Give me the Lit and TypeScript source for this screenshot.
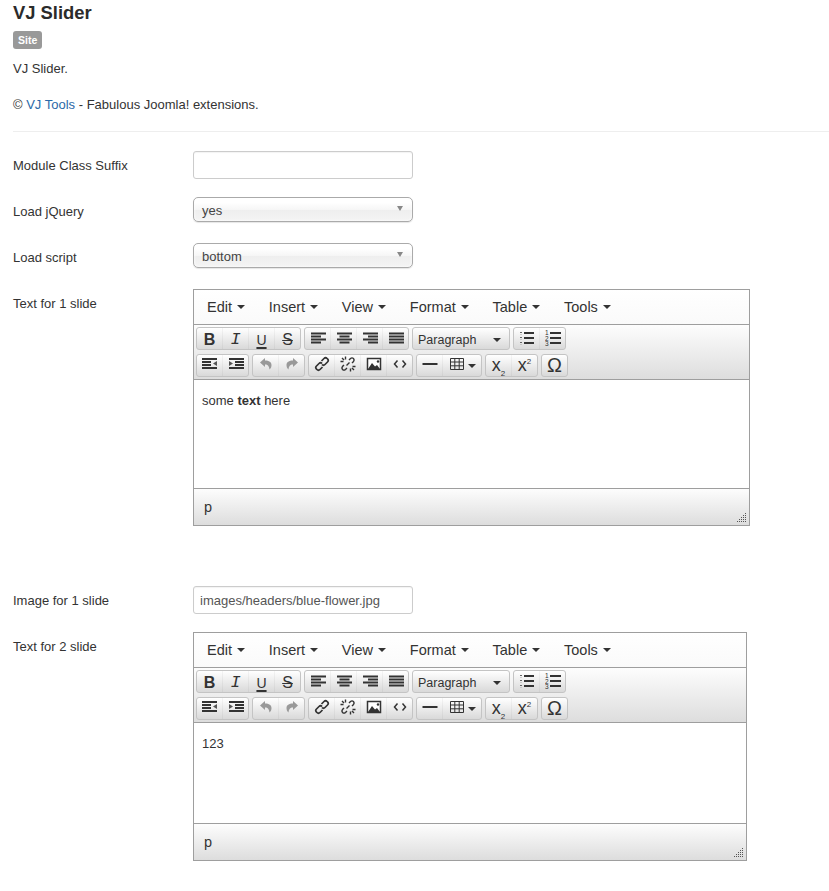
import { LitElement, html, css, svg } from 'lit';
import { customElement, property } from 'lit/decorators.js';

// four horizontal bars, [x, width] per row
const bars = (rows: number[][]) => html`<svg width="16" height="16" viewBox="0 0 16 16">
  ${rows.map(([x, w], i) => svg`<rect x=${x} y=${2.500 + i * 3} width=${w} height="2" fill="#333"></rect>`)}
</svg>`;

const icon = (body: unknown) => html`<svg width="16" height="16" viewBox="0 0 16 16">${body}</svg>`;

const icons: Record<string, unknown> = {
  alignleft: bars([[1, 15], [1, 10], [1, 15], [1, 10]]),
  aligncenter: bars([[1, 15], [3.500, 10], [1, 15], [3.500, 10]]),
  alignright: bars([[1, 15], [6, 10], [1, 15], [6, 10]]),
  justify: bars([[1, 15], [1, 15], [1, 15], [1, 15]]),
  bullist: icon(svg`
    <path d="M5 2h10v2H5zM5 7h10v2H5zM5 12h10v2H5z" fill="#333"></path>
    <path d="M1 2h2v1H1zM1 7h2v1H1zM1 12h2v1H1z" fill="#666"></path>
    <path d="M1 4h2v.6H1zM1 9h2v.6H1zM1 14h2v.6H1z" fill="#aaa"></path>`),
  numlist: icon(svg`
    <path d="M5 2h11v2H5zM5 7h11v2H5zM5 12h11v2H5z" fill="#333"></path>
    <text x="0" y="5" font-size="6.500" font-family="Liberation Sans" fill="#333">1</text>
    <text x="0" y="10.500" font-size="6.500" font-family="Liberation Sans" fill="#333">2</text>
    <text x="0" y="16" font-size="6.500" font-family="Liberation Sans" fill="#333">3</text>`),
  outdent: icon(svg`
    <path d="M0 2h15v2H0zM0 5h9v2H0zM0 8h9v2H0zM0 11h15v2H0z" fill="#333"></path>
    <path d="M15 5v5l-4-2.500z" fill="#555"></path>`),
  indent: icon(svg`
    <path d="M1 2h15v2H1zM7 5h9v2H7zM7 8h9v2H7zM1 11h15v2H1z" fill="#333"></path>
    <path d="M1 5v5l4-2.500z" fill="#555"></path>`),
  undo: icon(svg`<path d="M7 2 2 6.500 7 11V8.500c3 0 4 1.500 4.500 5 1.500-1 2-3 2-4.500 0-3-2.500-4.500-6.500-4.500z" fill="#999"></path>`),
  redo: icon(svg`<path d="M9 2 14 6.500 9 11V8.500c-3 0-4 1.500-4.500 5-1.500-1-2-3-2-4.500 0-3 2.500-4.500 6.500-4.500z" fill="#999"></path>`),
  link: icon(svg`<g fill="none" stroke="#333" stroke-width="1.700">
    <path d="M7.500 5 10 2.500a2.200 2.200 0 0 1 3.100 0l.4.400a2.200 2.200 0 0 1 0 3.100L11 8.500a2.200 2.200 0 0 1-3.100 0"></path>
    <path d="M8.500 11 6 13.500a2.200 2.200 0 0 1-3.100 0l-.4-.400a2.200 2.200 0 0 1 0-3.100L5 7.500a2.200 2.200 0 0 1 3.100 0"></path></g>`),
  unlink: icon(svg`<g fill="none" stroke="#333" stroke-width="1.400">
    <path d="M9 4 10.500 2.500a2.300 2.300 0 0 1 3 0 2.300 2.300 0 0 1 0 3L12 7"></path>
    <path d="M7 12 5.500 13.500a2.300 2.300 0 0 1-3 0 2.300 2.300 0 0 1 0-3L4 9"></path>
    <path d="M5.500 0.500v3M0.500 5.500h3M10.500 12.500v3M12.500 10.500h3M2 2l2 2M12 12l2 2M6.500 9.500l3-3"></path></g>`),
  image: icon(svg`
    <path d="M1.500 2.500h13v11h-13z" fill="#fff" stroke="#333" stroke-width="1.500"></path>
    <path d="M2 13 6 7l3 3.500 2-1.500 3 4z" fill="#333"></path>
    <circle cx="12" cy="5.500" r="1.200" fill="#333"></circle>`),
  code: icon(svg`<path d="M5.500 4.500 2.500 8l3 3.500M10.500 4.500l3 3.500-3 3.500" fill="none" stroke="#333" stroke-width="1.500"></path>`),
  hr: icon(svg`<rect x="0.500" y="7" width="15" height="2" fill="#333"></rect>`),
  table: icon(svg`<path d="M1.500 2.500h13v11h-13zM1.500 6h13M1.500 9.800h13M5.800 2.500v11M10.200 2.500v11" fill="none" stroke="#333"></path>`),
};

type Btn = { icon?: string; text?: string; cls?: string; caret?: boolean };

const toolbarRows: Btn[][][] = [
  [
    [
      { text: 'B', cls: 'bold' },
      { text: 'I', cls: 'ital' },
      { text: 'U', cls: 'under' },
      { text: 'S', cls: 'strike' },
    ],
    [{ icon: 'alignleft' }, { icon: 'aligncenter' }, { icon: 'alignright' }, { icon: 'justify' }],
    [{ text: 'Paragraph', cls: 'listbox', caret: true }],
    [{ icon: 'bullist' }, { icon: 'numlist' }],
  ],
  [
    [{ icon: 'outdent' }, { icon: 'indent' }],
    [{ icon: 'undo' }, { icon: 'redo' }],
    [{ icon: 'link' }, { icon: 'unlink' }, { icon: 'image' }, { icon: 'code' }],
    [{ icon: 'hr' }, { icon: 'table', caret: true, cls: 'wide' }],
    [{ text: 'x', cls: 'sub' }, { text: 'x', cls: 'sup' }],
    [{ text: 'Ω', cls: 'omega' }],
  ],
];

const menus = ['Edit', 'Insert', 'View', 'Format', 'Table', 'Tools'];

@customElement('tiny-editor')
export class TinyEditor extends LitElement {
  static styles = css`
    :host {
      display: block;
      box-sizing: border-box;
      border: 1px solid #9e9e9e;
      font-family: 'Liberation Sans', Arial, sans-serif;
      color: #333;
    }
    .menubar {
      display: flex;
      height: 34px;
      align-items: center;
      padding-left: 13px;
      gap: 23.800px;
      border-bottom: 1px solid #9e9e9e;
      background: linear-gradient(#fff, #fafafa);
      font-size: 14.500px;
    }
    .menu {
      display: flex;
      align-items: center;
      gap: 5px;
    }
    .caret {
      width: 0;
      height: 0;
      border-left: 4px solid transparent;
      border-right: 4px solid transparent;
      border-top: 4px solid #333;
    }
    .toolbar {
      height: 55px;
      box-sizing: border-box;
      padding: 2px 2px 0;
      display: flex;
      flex-direction: column;
      gap: 4px;
      background: linear-gradient(#fdfdfd, #ddd);
      border-bottom: 1px solid #9e9e9e;
    }
    .row {
      display: flex;
      gap: 3px;
    }
    .group {
      display: flex;
      height: 23px;
      box-sizing: border-box;
      border: 1px solid #c4c4c4;
      border-radius: 3px;
      background: linear-gradient(#fff, #d9d9d9);
    }
    .btn {
      display: flex;
      align-items: center;
      justify-content: center;
      box-sizing: border-box;
      width: 25px;
      gap: 4px;
      font-size: 14px;
      color: #333;
    }
    .row:first-child .btn {
      padding-top: 2px;
    }
    .btn + .btn {
      margin-left: 1px;
      box-shadow: -1px 0 0 rgba(0, 0, 0, 0.04);
    }
    .bold {
      font-weight: bold;
      font-size: 16px;
    }
    .ital {
      font-family: 'Liberation Mono', monospace;
      font-style: italic;
      font-size: 17px;
    }
    .under span {
      text-decoration: underline 2px;
      text-underline-offset: 2px;
      font-size: 14px;
    }
    .strike {
      text-decoration: line-through;
      font-size: 16px;
    }
    .listbox {
      width: 96px;
      font-size: 12.500px;
      justify-content: space-between;
      padding: 0 8px 0 5px;
    }
    .wide {
      width: 38px;
      gap: 3px;
    }
    .sub sub,
    .sup sup {
      font-size: 8px;
      line-height: 0;
    }
    .sub,
    .sup {
      font-size: 18px;
      gap: 0;
    }
    .omega {
      font-size: 20px;
    }
    .edit {
      background: #fff;
      padding: 13px 8px 0;
      font-size: 13px;
      box-sizing: border-box;
      border-bottom: 1px solid #9e9e9e;
      line-height: 15px;
    }
    .status {
      position: relative;
      height: 36px;
      display: flex;
      align-items: center;
      padding-left: 10px;
      font-size: 14.500px;
      background: linear-gradient(#fdfdfd, #ddd);
    }
    .grip {
      position: absolute;
      right: 2px;
      bottom: 2px;
    }
  `;

  @property({ type: Number }) editHeight = 109;

  private renderBtn(b: Btn) {
    let inner: unknown = b.text;
    if (b.cls === 'sub') inner = html`x<sub>2</sub>`;
    if (b.cls === 'sup') inner = html`x<sup>2</sup>`;
    if (b.icon) inner = icons[b.icon];
    return html`<div class="btn ${b.cls ?? ''}">
      <span>${inner}</span>${b.caret ? html`<i class="caret"></i>` : ''}
    </div>`;
  }

  render() {
    return html`
      <div class="menubar">
        ${menus.map((m) => html`<div class="menu"><span>${m}</span><i class="caret"></i></div>`)}
      </div>
      <div class="toolbar">
        ${toolbarRows.map(
          (row) => html`<div class="row">
            ${row.map((group) => html`<div class="group">${group.map((b) => this.renderBtn(b))}</div>`)}
          </div>`
        )}
      </div>
      <div class="edit" style="height: ${this.editHeight}px"><slot></slot></div>
      <div class="status">
        <span>p</span>
        <svg class="grip" width="10" height="10" viewBox="0 0 10 10" fill="#555">
          <path
            d="M8 0h1v1H8zM8 2h1v1H8zM6 2h1v1H6zM8 4h1v1H8zM6 4h1v1H6zM4 4h1v1H4zM8 6h1v1H8zM6 6h1v1H6zM4 6h1v1H4zM2 6h1v1H2zM8 8h1v1H8zM6 8h1v1H6zM4 8h1v1H4zM2 8h1v1H2zM0 8h1v1H0z"
          ></path>
        </svg>
      </div>
    `;
  }
}

@customElement('app-root')
export class AppRoot extends LitElement {
  static styles = css`
    :host {
      display: block;
      font-family: 'Liberation Sans', Arial, sans-serif;
      font-size: 13px;
      color: #333;
      padding: 0 0 30px 13px;
      background: #fff;
    }
    h1 {
      margin: 0;
      padding-top: 2px;
      font-size: 18.400px;
      line-height: 21px;
      font-weight: bold;
      color: #2b2b2b;
    }
    .badge {
      display: inline-block;
      margin-top: 8px;
      height: 18px;
      line-height: 18px;
      padding: 0 5px;
      border-radius: 3px;
      background: #999;
      color: #fff;
      font-size: 10.500px;
      font-weight: bold;
      vertical-align: top;
    }
    .desc {
      margin: 0;
      line-height: 18px;
    }
    .desc.first {
      margin-top: 11px;
    }
    .desc.second {
      margin-top: 18px;
    }
    a {
      color: #2a69a8;
      text-decoration: none;
    }
    hr {
      border: 0;
      border-top: 1px solid #eee;
      margin: 17px 0 19px;
    }
    .field {
      display: flex;
      margin-bottom: 18px;
    }
    .field.tall {
      margin-bottom: 60px;
    }
    .field.last {
      margin-bottom: 0;
    }
    label {
      width: 180px;
      flex: none;
      box-sizing: border-box;
      height: 28px;
      padding-top: 1px;
      line-height: 28px;
    }
    .input {
      box-sizing: border-box;
      width: 220px;
      height: 28px;
      border: 1px solid #ccc;
      border-radius: 3px;
      padding: 0 6px;
      line-height: 28px;
      color: #555;
      box-shadow: inset 0 1px 1px rgba(0, 0, 0, 0.05);
    }
    .select {
      box-sizing: border-box;
      width: 220px;
      height: 25px;
      border: 1px solid #aaa;
      border-radius: 5px;
      padding: 0 8px;
      display: flex;
      align-items: center;
      justify-content: space-between;
      color: #444;
      background: linear-gradient(#fff 20%, #f6f6f6 50%, #eee 52%, #f4f4f4);
      box-shadow: 0 0 3px #fff inset, 0 1px 1px rgba(0, 0, 0, 0.1);
    }
    .select span {
      padding-top: 2px;
    }
    .arrow {
      width: 0;
      height: 0;
      border-left: 3px solid transparent;
      border-right: 3px solid transparent;
      border-top: 5px solid #888;
      margin: -2px 1px 0 0;
    }
    .editor-1 {
      width: 557px;
    }
    .editor-2 {
      width: 554px;
    }
  `;

  render() {
    return html`
      <h1>VJ Slider</h1>
      <span class="badge">Site</span>
      <p class="desc first">VJ Slider.</p>
      <p class="desc second">© <a>VJ Tools</a> - Fabulous Joomla! extensions.</p>
      <hr />
      <div class="field">
        <label>Module Class Suffix</label>
        <div class="input"></div>
      </div>
      <div class="field">
        <label>Load jQuery</label>
        <div class="select"><span>yes</span><i class="arrow"></i></div>
      </div>
      <div class="field">
        <label>Load script</label>
        <div class="select"><span>bottom</span><i class="arrow"></i></div>
      </div>
      <div class="field tall">
        <label>Text for 1 slide</label>
        <tiny-editor class="editor-1" .editHeight=${109}>
          <span>some <b>text</b> here</span>
        </tiny-editor>
      </div>
      <div class="field">
        <label>Image for 1 slide</label>
        <div class="input">images/headers/blue-flower.jpg</div>
      </div>
      <div class="field last">
        <label>Text for 2 slide</label>
        <tiny-editor class="editor-2" .editHeight=${101}>
          <span>123</span>
        </tiny-editor>
      </div>
    `;
  }
}
